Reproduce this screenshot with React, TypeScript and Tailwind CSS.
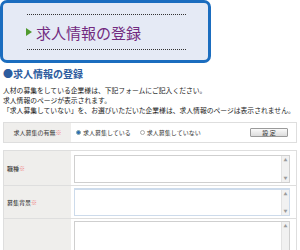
export default function App() {
  const jp = "font-['Noto_Sans_CJK_JP','Noto_Sans',sans-serif]";

  const Area = ({ focused, tall }: { focused?: boolean; tall?: boolean }) => (
    <div
      className={`flex w-[216px] ${tall ? "h-[40px]" : "h-[28px]"} bg-white border ${
        focused ? "border-[#cddbeb] border-t-2" : "border-[#cfcfcf]"
      }`}
    >
      <div className="flex-1" />
      <div className="w-[8px] bg-[#f1f1f1] border-l border-[#e2e2e2] flex flex-col justify-between items-center py-[2px]">
        <span className="text-[4px] leading-[4px] text-[#9a9a9a]">▲</span>
        {!tall && <span className="text-[4px] leading-[4px] text-[#9a9a9a]">▼</span>}
      </div>
    </div>
  );

  return (
    <div className={`w-[300px] h-[250px] bg-white overflow-hidden ${jp}`}>
      {/* header box */}
      <div className="w-[211px] h-[63px] border-[3px] border-[#1b6dbf] rounded-[7px] bg-[#e5eaf5] pt-[11px]">
        <div className="ml-[24px] w-[159px] border-t border-dotted border-[#333]" />
        <div className="h-[34px] ml-[23px] flex items-center gap-[4px]">
          <svg width="6" height="8" viewBox="0 0 6 8">
            <path d="M0 0 L6 4 L0 8 Z" fill="#4f9a2e" />
          </svg>
          <span className="text-[15px] leading-[15px] text-[#722a80]">求人情報の登録</span>
        </div>
        <div className="ml-[24px] w-[159px] border-t border-dotted border-[#333]" />
      </div>

      <div className="mt-[5px] ml-[3px] text-[10px] leading-[12px] font-bold text-[#2d5c9e]">●求人情報の登録</div>

      <div className="mt-[5px] ml-[3px] text-[6.8px] leading-[10px] text-[#222]">
        <p>人材の募集をしている企業様は、下記フォームにご記入ください。</p>
        <p>求人情報のページが表示されます。</p>
        <p>「求人募集していない」を、お選びいただいた企業様は、求人情報のページは表示されません。</p>
      </div>

      {/* status row */}
      <div className="mt-[7px] mx-[3px] h-[21px] border border-[#dedede] flex text-[6px] text-[#333]">
        <div className="w-[67px] bg-[#efeeec] flex items-center justify-center">
          求人募集の有無<span className="text-[#f07c7c]">※</span>
        </div>
        <div className="flex-1 flex items-center pl-[5px]">
          <span className="w-[5px] h-[5px] rounded-full border border-[#8aa] bg-[#2f6db5] mr-[2px]" />
          <span>求人募集している</span>
          <span className="w-[5px] h-[5px] rounded-full border border-[#aaa] bg-white ml-[9px] mr-[2px]" />
          <span>求人募集していない</span>
          <button className="ml-auto mr-[8px] w-[38px] h-[9px] border border-[#9a9a9a] rounded-[1px] bg-gradient-to-b from-[#fafafa] to-[#dcdcdc] text-[6px] leading-[7px] text-[#333]">
            設 定
          </button>
        </div>
      </div>

      {/* form table */}
      <div className="mt-[7px] mx-[3px] border border-[#dedede] text-[6px] text-[#222]">
        <div className="flex border-b border-[#dedede]">
          <div className="w-[67px] bg-[#efeeec] flex items-center pl-[3px]">
            職種<span className="text-[#f07c7c]">※</span>
          </div>
          <div className="flex-1 pl-[3px] pt-[4px] pb-[2px]">
            <Area />
          </div>
        </div>
        <div className="flex border-b border-[#dedede]">
          <div className="w-[67px] bg-[#efeeec] flex items-center pl-[3px]">
            募集背景<span className="text-[#f07c7c]">※</span>
          </div>
          <div className="flex-1 pl-[3px] py-[2px]">
            <Area focused />
          </div>
        </div>
        <div className="flex">
          <div className="w-[67px] bg-[#efeeec]" />
          <div className="flex-1 pl-[3px] py-[2px]">
            <Area tall />
          </div>
        </div>
      </div>
    </div>
  );
}
